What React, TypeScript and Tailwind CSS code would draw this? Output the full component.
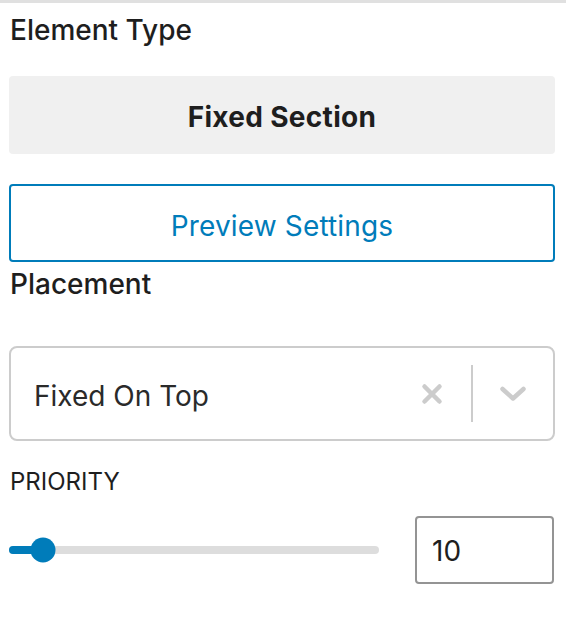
import React from 'react'

function ClearIcon() {
  return (
    <svg width="22" height="22" viewBox="0 0 22 22" className="block">
      <path d="M3.5 3.5 L18.5 18.5 M18.5 3.5 L3.5 18.5" stroke="#cccccc" strokeWidth="4.5" strokeLinecap="round" fill="none" />
    </svg>
  )
}

function ChevronIcon() {
  return (
    <svg width="28" height="18" viewBox="0 0 28 18" className="block">
      <path d="M3.5 4 L14 13.5 L24.5 4" stroke="#cccccc" strokeWidth="4.5" strokeLinecap="round" strokeLinejoin="round" fill="none" />
    </svg>
  )
}

export default function App() {
  const value = 10
  const fill = 34

  return (
    <div className="min-h-[624px] bg-white font-['Inter',sans-serif] text-[#1e1e1e]">
      <div className="border-t-[3px] border-[#e0e0e0]" />
      <div className="pl-[9px] pr-[11px]">
        <div className="pt-[9px] pl-px text-[28px] leading-[36px] font-medium">Element Type</div>

        <div className="mt-[28px] flex h-[78px] items-center justify-center rounded-[4px] bg-[#f0f0f0] pt-[4px] text-[28px] font-bold tracking-[0.3px]">
          Fixed Section
        </div>

        <button className="mt-[30px] flex h-[78px] w-full items-center justify-center rounded-[4px] border-2 border-[#007cba] bg-white pt-[5px] text-[28px] tracking-[0.15px] text-[#007cba]">
          Preview Settings
        </button>

        <div className="mt-[4px] pl-px text-[28px] leading-[36px] font-medium">Placement</div>

        <div className="mt-[44px] flex h-[95px] items-center rounded-[8px] border-2 border-[#cccccc] pl-[23px] pr-[26px]">
          <span className="flex-1 pt-[4px] text-[28px] text-[#2a2a2a]">Fixed On Top</span>
          <ClearIcon />
          <div className="ml-[28px] h-[57px] w-[2px] bg-[#cccccc]" />
          <div className="ml-[26px]">
            <ChevronIcon />
          </div>
        </div>

        <div className="mt-[25px] pl-px text-[24px] leading-[32px] uppercase">Priority</div>

        <div className="mt-[18px] flex items-center justify-between">
          <div className="relative h-[8px] w-[370px] rounded-full bg-[#dddddd]">
            <div className="h-full rounded-full bg-[#007cba]" style={{ width: fill }} />
            <div
              className="absolute top-1/2 h-[25px] w-[25px] -translate-x-1/2 -translate-y-1/2 rounded-full bg-[#007cba]"
              style={{ left: fill }}
            />
          </div>
          <input
            type="text"
            readOnly
            value={value}
            className="mr-px h-[68px] w-[139px] rounded-[4px] border-2 border-[#949494] pl-[15px] pt-[2px] text-[28px] text-[#1e1e1e] outline-none"
          />
        </div>
      </div>
    </div>
  )
}
